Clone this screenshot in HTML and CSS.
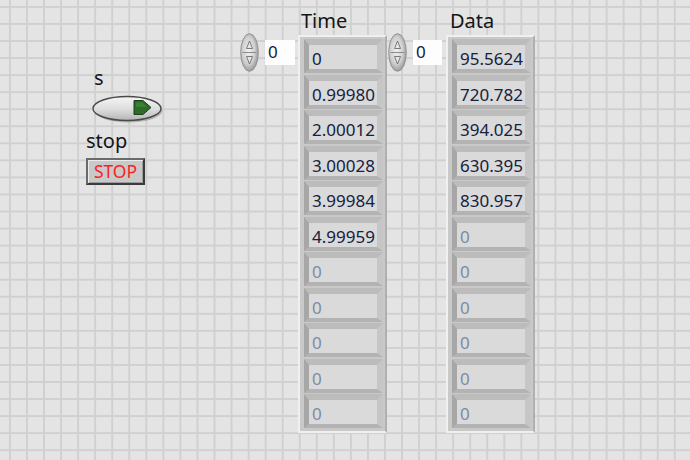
FILE: index.html
```html
<!DOCTYPE html>
<html>
<head>
<meta charset="utf-8">
<link rel="stylesheet" href="styles.css">
</head>
<body>
<div class="panel">
  <div class="bools">
    <div class="label lbl-s">s</div>
    <svg class="switch" width="72" height="29" viewBox="0 0 72 29">
      <defs>
        <linearGradient id="sw" x1="0" y1="0" x2="0" y2="1">
          <stop offset="0" stop-color="#f6f6f6"/>
          <stop offset="0.55" stop-color="#dcdcdc"/>
          <stop offset="1" stop-color="#b4b4b4"/>
        </linearGradient>
      </defs>
      <ellipse cx="36.5" cy="15.5" rx="34" ry="12" fill="#8a8a8a" opacity="0.55"/>
      <ellipse cx="35" cy="13.5" rx="34" ry="12" fill="url(#sw)" stroke="#4a4a4a" stroke-width="1.4"/>
      <polygon points="42,5.5 51,5.5 59,12.5 51,19.5 42,19.5" fill="#2e6b2a" stroke="#1d3f1b" stroke-width="1"/>
      <polygon points="44,7.5 50,7.5 55,12 44,12" fill="#3f8a39" opacity="0.7"/>
    </svg>
    <div class="label lbl-stop">stop</div>
    <div class="stop-btn">STOP</div>
  </div>

  <div class="arr arr-time">
    <div class="label arr-label">Time</div>
    <div class="arr-row">
      <div class="index">
        <svg class="spin" width="19" height="39" viewBox="0 0 19 39">
          <defs>
            <radialGradient id="sp" cx="0.45" cy="0.45" r="0.6">
              <stop offset="0" stop-color="#f2f2f2"/>
              <stop offset="0.6" stop-color="#cfcfcf"/>
              <stop offset="1" stop-color="#8e8e8e"/>
            </radialGradient>
          </defs>
          <ellipse cx="9.5" cy="19.5" rx="8.8" ry="18.8" fill="url(#sp)" stroke="#929292" stroke-width="1"/>
          <line x1="2.5" y1="19.5" x2="16.5" y2="19.5" stroke="#8a8a8a" stroke-width="1"/>
          <polygon points="9.5,8 12.5,15.5 6.5,15.5" fill="#e6e6e6" stroke="#6e6e6e" stroke-width="0.9"/>
          <polygon points="9.5,31 12.5,23.5 6.5,23.5" fill="#e6e6e6" stroke="#6e6e6e" stroke-width="0.9"/>
        </svg>
        <div class="idx-box">0</div>
      </div>
      <div class="frame">
        <div class="cell"><span>0</span></div>
        <div class="cell"><span>0.99980</span></div>
        <div class="cell"><span>2.00012</span></div>
        <div class="cell"><span>3.00028</span></div>
        <div class="cell"><span>3.99984</span></div>
        <div class="cell"><span>4.99959</span></div>
        <div class="cell dim"><span>0</span></div>
        <div class="cell dim"><span>0</span></div>
        <div class="cell dim"><span>0</span></div>
        <div class="cell dim"><span>0</span></div>
        <div class="cell dim"><span>0</span></div>
      </div>
    </div>
  </div>

  <div class="arr arr-data">
    <div class="label arr-label">Data</div>
    <div class="arr-row">
      <div class="index">
        <svg class="spin" width="19" height="39" viewBox="0 0 19 39">
          <defs>
            <radialGradient id="sp2" cx="0.45" cy="0.45" r="0.6">
              <stop offset="0" stop-color="#f2f2f2"/>
              <stop offset="0.6" stop-color="#cfcfcf"/>
              <stop offset="1" stop-color="#8e8e8e"/>
            </radialGradient>
          </defs>
          <ellipse cx="9.5" cy="19.5" rx="8.8" ry="18.8" fill="url(#sp2)" stroke="#929292" stroke-width="1"/>
          <line x1="2.5" y1="19.5" x2="16.5" y2="19.5" stroke="#8a8a8a" stroke-width="1"/>
          <polygon points="9.5,8 12.5,15.5 6.5,15.5" fill="#e6e6e6" stroke="#6e6e6e" stroke-width="0.9"/>
          <polygon points="9.5,31 12.5,23.5 6.5,23.5" fill="#e6e6e6" stroke="#6e6e6e" stroke-width="0.9"/>
        </svg>
        <div class="idx-box">0</div>
      </div>
      <div class="frame">
        <div class="cell"><span>95.5624</span></div>
        <div class="cell"><span>720.782</span></div>
        <div class="cell"><span>394.025</span></div>
        <div class="cell"><span>630.395</span></div>
        <div class="cell"><span>830.957</span></div>
        <div class="cell dim"><span>0</span></div>
        <div class="cell dim"><span>0</span></div>
        <div class="cell dim"><span>0</span></div>
        <div class="cell dim"><span>0</span></div>
        <div class="cell dim"><span>0</span></div>
        <div class="cell dim"><span>0</span></div>
      </div>
    </div>
  </div>
</div>
</body>
</html>
```

FILE: styles.css
```css
html, body {
  margin: 0;
  padding: 0;
}
body {
  width: 690px;
  height: 460px;
  overflow: hidden;
  background-color: #e4e4e4;
  background-image:
    linear-gradient(to right, #d0d0d0 0, #d0d0d0 2px, transparent 2px),
    linear-gradient(to bottom, #d0d0d0 0, #d0d0d0 2px, transparent 2px);
  background-size: 17.05px 17.05px;
  background-position: 9px 6px;
  font-family: "Noto Sans", "Open Sans", "DejaVu Sans", sans-serif;
  color: #1a1a1a;
}
.panel {
  display: flex;
  align-items: flex-start;
}
.label {
  font-size: 20px;
  line-height: 24px;
  color: #151515;
  white-space: nowrap;
}
.bools {
  width: 80px;
  margin-left: 86px;
  padding-top: 66px;
  display: flex;
  flex-direction: column;
  align-items: flex-start;
}
.lbl-s {
  margin-left: 8px;
}
.switch {
  display: block;
  margin-top: 5px;
  margin-left: 6px;
  margin-bottom: -2px;
}
.lbl-stop {
  margin-top: 7px;
}
.stop-btn {
  margin-top: 5px;
  width: 59px;
  height: 27px;
  box-sizing: border-box;
  border: 2px solid;
  border-color: #6a6a6a #3c3c3c #3c3c3c #6a6a6a;
  background: #c9c9c9;
  box-shadow: inset 1px 1px 0 #ececec, inset -1px -1px 0 #9c9c9c;
  color: #ff1e1e;
  font-size: 17.5px;
  line-height: 23px;
  text-align: center;
}
.arr {
  display: flex;
  flex-direction: column;
  padding-top: 9px;
}
.arr-time {
  margin-left: 74px;
}
.arr-data {
  margin-left: 1px;
}
.arr-label {
  margin-left: 61px;
}
.arr-data .arr-label {
  margin-left: 62px;
}
.arr-row {
  display: flex;
  align-items: flex-start;
  margin-top: 2px;
}
.index {
  display: flex;
  align-items: flex-start;
  margin-top: -2px;
}
.spin {
  display: block;
}
.idx-box {
  margin-top: 7px;
  margin-left: 6px;
  width: 30px;
  height: 25px;
  box-sizing: border-box;
  background: #fdfdfd;
  font-size: 17px;
  line-height: 24px;
  padding-left: 3px;
  color: #13203f;
}
.arr-data .idx-box {
  margin-left: 6px;
  width: 29px;
}
.arr-time .frame {
  margin-left: 3px;
}
.arr-data .frame {
  margin-left: 4px;
}
.frame {
  width: 89px;
  box-sizing: border-box;
  border: 2px solid;
  border-color: #f0f0f0 #b0b0b0 #f0f0f0 #f0f0f0;
  background: #c9c9c9;
  padding: 2px 2px 3px 4px;
  display: flex;
  flex-direction: column;
  gap: 1.5px;
}
.cell {
  height: 34px;
  box-sizing: border-box;
  border-style: solid;
  border-width: 6px 6px 4px 5px;
  border-color: #bcbcbc #c6c6c6 #b3b3b3 #a7a7a7;
  background: #dadada;
  overflow: hidden;
  font-size: 17px;
  line-height: 27px;
  padding-left: 3px;
  white-space: nowrap;
  color: #14213f;
}
.cell.dim {
  color: #7b8ca6;
}
```
